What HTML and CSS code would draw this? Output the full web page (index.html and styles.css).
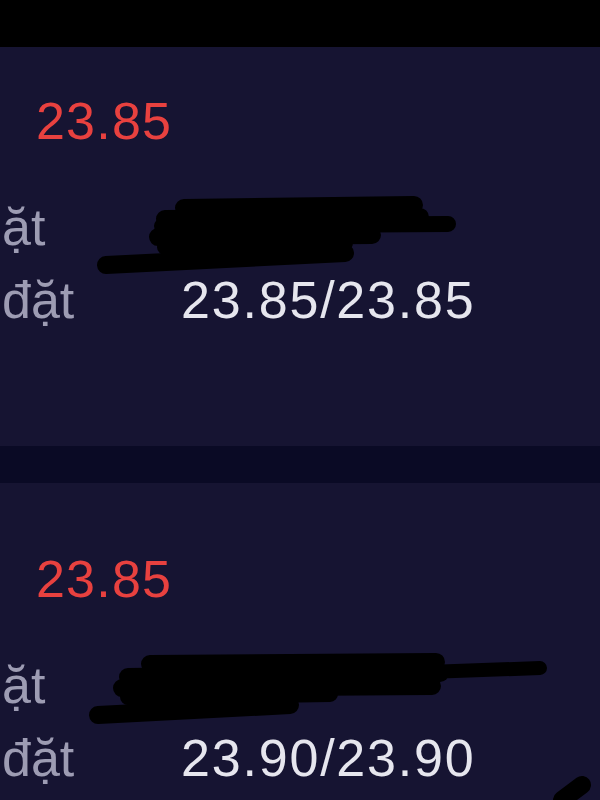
FILE: index.html
```html
<!DOCTYPE html>
<html lang="vi">
<head>
  <meta charset="UTF-8" />
  <meta name="viewport" content="width=device-width, initial-scale=1.0"/>
  <title>Lệnh đặt</title>
  <link rel="stylesheet" href="styles.css">
</head>
<body>
  <div class="status-bar"></div>

  <!-- Order 1 -->
  <section class="order order-first">
    <div class="price">23.85</div>
    <div class="row">
      <span class="label">ặt</span>
      <span class="value"></span>
    </div>
    <div class="row">
      <span class="label">đặt</span>
      <span class="value">23.85/23.85</span>
    </div>
    <svg class="scribble" width="600" height="400" viewBox="0 0 600 400">
      <g stroke="#000" stroke-linecap="round" fill="none">
        <path d="M184 161 L414 158" stroke-width="18"/>
        <path d="M165 172 L420 170" stroke-width="18"/>
        <path d="M162 179 L448 177" stroke-width="16"/>
        <path d="M158 190 L372 188" stroke-width="18"/>
        <path d="M165 200 L345 196" stroke-width="16"/>
        <path d="M106 218 L345 206" stroke-width="18"/>
      </g>
    </svg>
  </section>

  <div class="divider"></div>

  <!-- Order 2 -->
  <section class="order">
    <div class="price">23.85</div>
    <div class="row">
      <span class="label">ặt</span>
      <span class="value"></span>
    </div>
    <div class="row">
      <span class="label">đặt</span>
      <span class="value">23.90/23.90</span>
    </div>
    <svg class="scribble" width="600" height="317" viewBox="0 0 600 317">
      <g stroke="#000" stroke-linecap="round" fill="none">
        <path d="M150 181 L436 179" stroke-width="18"/>
        <path d="M400 190 L540 185" stroke-width="14"/>
        <path d="M128 194 L440 190" stroke-width="18"/>
        <path d="M122 205 L432 203" stroke-width="18"/>
        <path d="M128 214 L330 211" stroke-width="16"/>
        <path d="M98 232 L290 222" stroke-width="18"/>
        <path d="M562 317 L582 302" stroke-width="18"/>
      </g>
    </svg>
  </section>
</body>
</html>
```

FILE: styles.css
```css
body {
  margin: 0;
  padding: 0;
  background-color: #0a0a25;
  font-family: 'Liberation Sans', Arial, sans-serif;
  height: 800px;
  overflow: hidden;
}

.status-bar {
  height: 47px;
  background-color: #000;
}

.order {
  position: relative;
  background-color: #161432;
  padding: 60px 0 109px 0;
  font-size: 52px;
  line-height: 73px;
}

.order-first {
  padding-top: 38px;
}

.divider {
  height: 37px;
  background-color: #0a0a25;
}

.price {
  color: #e8413f;
  padding-left: 36px;
  margin-bottom: 33px;
  letter-spacing: 1.2px;
}

.row {
  display: flex;
  height: 73px;
}

.label {
  width: 179px;
  padding-left: 2px;
  color: #9d9cb3;
}

.value {
  color: #e6e6ee;
  letter-spacing: 1.8px;
}

.scribble {
  position: absolute;
  left: 0;
  top: 0;
}
```
